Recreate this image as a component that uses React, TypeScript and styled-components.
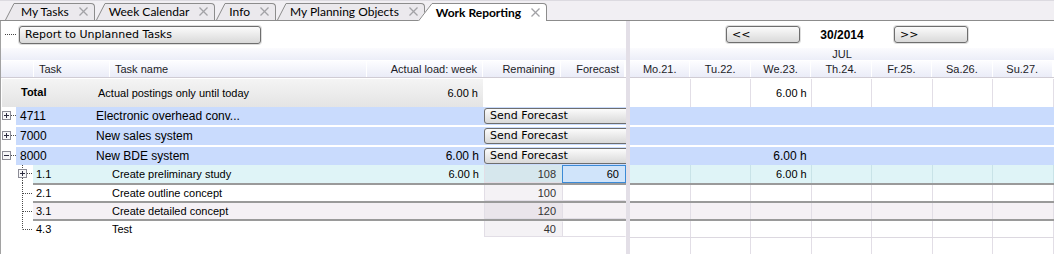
import React from 'react';
import styled, { createGlobalStyle } from 'styled-components';

type Tone = 'blue' | 'cyan' | 'white' | 'pink';

interface TaskRow {
  id: string;
  name: string;
  level: 0 | 1;
  expander?: '+' | '-';
  branch?: 'mid' | 'last';
  actual?: string;
  remaining?: string;
  forecast?: string;
  tone: Tone;
  send?: boolean;
  we?: string;
  gap?: number;
  divider?: boolean;
}

const rows: TaskRow[] = [
  { id: '4711', name: 'Electronic overhead conv...', level: 0, expander: '+', tone: 'blue', send: true, gap: 2 },
  { id: '7000', name: 'New sales system', level: 0, expander: '+', tone: 'blue', send: true, gap: 2 },
  { id: '8000', name: 'New BDE system', level: 0, expander: '-', actual: '6.00 h', tone: 'blue', send: true, we: '6.00 h' },
  { id: '1.1', name: 'Create preliminary study', level: 1, expander: '+', actual: '6.00 h', remaining: '108', forecast: '60', tone: 'cyan', we: '6.00 h' },
  { id: '2.1', name: 'Create outline concept', level: 1, branch: 'mid', remaining: '100', tone: 'white', divider: true },
  { id: '3.1', name: 'Create detailed concept', level: 1, branch: 'mid', remaining: '120', tone: 'pink', divider: true },
  { id: '4.3', name: 'Test', level: 1, branch: 'last', remaining: '40', tone: 'white', divider: true },
];

const tabs = ['My Tasks', 'Week Calendar', 'Info', 'My Planning Objects', 'Work Reporting'];
const days = ['Mo.21.', 'Tu.22.', 'We.23.', 'Th.24.', 'Fr.25.', 'Sa.26.', 'Su.27.'];

const toneBg: Record<Tone, string> = {
  blue: '#c9dbfd',
  cyan: '#dff4f7',
  white: '#ffffff',
  pink: '#f5f1f5',
};

const toneLine: Record<Tone, string> = {
  blue: 'transparent',
  cyan: '#c9e3e8',
  white: '#e2dee6',
  pink: '#e2dee6',
};

const GlobalStyle = createGlobalStyle`
  html, body { margin: 0; padding: 0; background: #fff; }
  body { font-family: "Liberation Sans", Arial, sans-serif; font-size: 11px; color: #000; }
  * { box-sizing: border-box; }
`;

const Window = styled.div`
  width: 1054px;
  height: 254px;
  display: flex;
  flex-direction: column;
  overflow: hidden;
  background: #fff;
`;

/* ---------- tabs ---------- */

const TabStrip = styled.div`
  height: 21px;
  flex: none;
  display: flex;
  align-items: flex-end;
  padding-left: 5px;
  background: #f1eff3;
  border-top: 1px solid #dcdae0;
  border-bottom: 1px solid #8c8c8c;
`;

const TabItem = styled.div<{ $active?: boolean; $first?: boolean }>`
  display: flex;
  align-items: stretch;
  height: ${p => (p.$active ? 18 : 17)}px;
  margin-bottom: ${p => (p.$active ? -1 : 0)}px;
  margin-left: ${p => (p.$first ? 0 : p.$active ? -7 : 1)}px;
  position: relative;
  z-index: ${p => (p.$active ? 1 : 0)};
`;

const TabFace = styled.div<{ $active?: boolean; $first?: boolean }>`
  display: flex;
  align-items: center;
  gap: 10px;
  padding: 0 6px 1px ${p => (p.$first ? 7 : 4)}px;
  background: ${p => (p.$active ? '#fff' : '#ebe9ed')};
  border-top: 1px solid #8c8c8c;
  border-right: 1px solid #8c8c8c;
  border-top-right-radius: 4px;
  font-family: Lato, "Noto Sans", sans-serif;
  font-size: 12px;
  font-weight: ${p => (p.$active ? 700 : 400)};
  white-space: nowrap;
`;

const TabSlant = ({ w, h, fill }: { w: number; h: number; fill: string }) => (
  <svg width={w} height={h} style={{ display: 'block', flex: 'none' }}>
    <polygon points={`0,${h} ${w},0 ${w},${h}`} fill={fill} />
    <line x1={0.5} y1={h} x2={w} y2={0.5} stroke="#8c8c8c" />
  </svg>
);

const CloseMark = () => (
  <svg width={9} height={9} style={{ display: 'block' }}>
    <line x1={0.5} y1={0.5} x2={8.5} y2={8.5} stroke="#a2a2a6" strokeWidth={1.2} />
    <line x1={8.5} y1={0.5} x2={0.5} y2={8.5} stroke="#a2a2a6" strokeWidth={1.2} />
  </svg>
);

const Tab = ({ label, active, first }: { label: string; active?: boolean; first?: boolean }) => (
  <TabItem $active={active} $first={first}>
    <TabSlant w={active ? 14 : 9} h={active ? 18 : 17} fill={active ? '#fff' : '#ebe9ed'} />
    <TabFace $active={active} $first={first}>
      <span>{label}</span>
      <CloseMark />
    </TabFace>
  </TabItem>
);

/* ---------- panes ---------- */

const Workspace = styled.div`
  flex: 1;
  display: flex;
  min-height: 0;
`;

const LeftPane = styled.div`
  width: 626px;
  flex: none;
  display: flex;
  flex-direction: column;
  border-left: 1px solid #a2a2a2;
  overflow: hidden;
`;

const Splitter = styled.div`
  width: 4px;
  flex: none;
  background: #e3dfe7;
`;

const RightPane = styled.div`
  flex: 1;
  display: flex;
  flex-direction: column;
  min-width: 0;
`;

const Toolbar = styled.div`
  height: 27px;
  flex: none;
  display: flex;
  align-items: center;
`;

const DotLead = styled.span`
  width: 11px;
  margin: 0 3px 0 4px;
  border-top: 1px dotted #444;
`;

const GreyButton = styled.button<{ $w: number; $h: number }>`
  width: ${p => p.$w}px;
  height: ${p => p.$h}px;
  margin: 0;
  padding: 0 0 0 5px;
  text-align: left;
  font-family: "DejaVu Sans", Verdana, sans-serif;
  font-size: 11px;
  line-height: ${p => p.$h - 2}px;
  color: #000;
  border: 1px solid #6e6e6e;
  border-radius: 3px;
  background: linear-gradient(#fbfbfb, #d9d9d9);
  box-shadow: 0 0 0 1px #dedede;
`;

const WeekNav = styled(Toolbar)`
  padding-left: 96px;
`;

const WeekLabel = styled.div`
  width: 94px;
  padding-right: 10px;
  text-align: center;
  font-size: 12px;
  font-weight: 700;
`;

const Band = styled.div`
  height: 12px;
  flex: none;
  display: flex;
  align-items: center;
  justify-content: center;
  background: linear-gradient(#fbfbfe, #eceef8);
  font-size: 11px;
  line-height: 12px;
  color: #1c1c28;
`;

const HeaderRow = styled.div<{ $cols: string }>`
  height: 18px;
  flex: none;
  display: grid;
  grid-template-columns: ${p => p.$cols};
  column-gap: 1px;
  padding: 1px 2px 0 0;
  border-bottom: 1px solid #d0ccd4;
  margin-bottom: 1px;
`;

const HeadCell = styled.div<{ $align?: 'left' | 'right' | 'center' }>`
  background: linear-gradient(#fdfdff, #eaecf7);
  padding: 0 5px;
  font-size: 11px;
  line-height: 16px;
  color: #1c1c28;
  white-space: nowrap;
  overflow: hidden;
  text-align: ${p => p.$align ?? 'left'};
`;

/* ---------- left rows ---------- */

const TotalRow = styled.div`
  height: 28px;
  flex: none;
  display: flex;
  padding-left: 1px;
`;

const TotalBand = styled.div`
  width: 481px;
  display: flex;
  align-items: center;
  background: linear-gradient(#f4f4f4, #e4e4e4);
`;

const TotalLabel = styled.div`
  width: 96px;
  padding-left: 19px;
  font-weight: 700;
  margin-top: -3px;
`;

const TotalNote = styled.div`
  flex: 1;
`;

const TotalValue = styled.div`
  padding-right: 5px;
`;

const TaskLine = styled.div<{ $gap?: number }>`
  height: 18px;
  flex: none;
  display: flex;
  margin-bottom: ${p => p.$gap ?? 0}px;
`;

const Gutter = styled.svg`
  display: block;
  flex: none;
`;

const TaskBody = styled.div<{ $tone: Tone; $level: 0 | 1; $divider?: boolean }>`
  flex: 1;
  min-width: 0;
  display: grid;
  grid-template-columns: ${p => (p.$level === 0 ? '80px 1fr 120px 142px' : '79px 1fr 120px 78px 64px')};
  align-items: center;
  background: ${p => toneBg[p.$tone]};
  border-top: ${p => (p.$divider ? '2px solid #9a9a9a' : 'none')};
  font-size: ${p => (p.$level === 0 ? 12 : 11)}px;
  white-space: nowrap;
`;

const IdCell = styled.div<{ $level: 0 | 1 }>`
  padding-left: ${p => (p.$level === 0 ? 4 : 3)}px;
`;

const NameCell = styled.div`
  overflow: hidden;
`;

const ActualCell = styled.div`
  text-align: right;
  padding-right: 5px;
`;

const RemainingCell = styled.div`
  align-self: stretch;
  display: flex;
  align-items: center;
  justify-content: flex-end;
  padding-right: 6px;
  color: #333;
  background: rgba(96, 76, 108, 0.07);
  border-left: 1px solid #e2dee6;
  border-bottom: 1px solid #e2dee6;
`;

const ForecastCell = styled.div<{ $editing?: boolean }>`
  align-self: stretch;
  display: flex;
  align-items: center;
  justify-content: flex-end;
  padding-right: 6px;
  border: 1px solid ${p => (p.$editing ? '#3b8ad6' : 'transparent')};
  border-bottom-color: ${p => (p.$editing ? '#3b8ad6' : '#e2dee6')};
  border-left-color: ${p => (p.$editing ? '#3b8ad6' : '#e2dee6')};
  background: ${p => (p.$editing ? '#d0e4fa' : 'transparent')};
`;

const SendCell = styled.div`
  overflow: hidden;
  height: 16px;
`;

/* ---------- right rows ---------- */

const DayLine = styled.div<{ $h: number; $gap?: number; $tone: Tone; $divider?: boolean }>`
  height: ${p => p.$h}px;
  flex: none;
  display: grid;
  grid-template-columns: repeat(7, 1fr);
  margin-bottom: ${p => p.$gap ?? 0}px;
  background: ${p => toneBg[p.$tone]};
  border-top: ${p => (p.$divider ? '2px solid #9a9a9a' : 'none')};
`;

const DayFiller = styled(DayLine)`
  flex: 1;
  border-top: 1px solid #dcd8e0;
`;

const DayCell = styled.div<{ $line: string; $big?: boolean }>`
  display: flex;
  align-items: center;
  justify-content: flex-end;
  padding-right: 4px;
  border-right: 1px solid ${p => p.$line};
  font-size: ${p => (p.$big ? 12 : 11)}px;
  white-space: nowrap;
`;

/* ---------- tree drawing ---------- */

const dots = { stroke: '#4a4a4a', strokeWidth: 1, strokeDasharray: '1 1' };

const Expander = ({ x, y, sign }: { x: number; y: number; sign: '+' | '-' }) => (
  <g>
    <rect x={x + 0.5} y={y + 0.5} width={8} height={8} fill="#f6f6f8" stroke="#8c8c96" />
    <line x1={x + 2} y1={y + 4.5} x2={x + 7} y2={y + 4.5} stroke="#2c2c40" />
    {sign === '+' && <line x1={x + 4.5} y1={y + 2} x2={x + 4.5} y2={y + 7} stroke="#2c2c40" />}
  </g>
);

const TreeGutter = ({ row }: { row: TaskRow }) => {
  if (row.level === 0) {
    return (
      <Gutter width={15} height={18}>
        <Expander x={1} y={4} sign={row.expander ?? '+'} />
        <line x1={10} y1={8.5} x2={15} y2={8.5} {...dots} />
      </Gutter>
    );
  }
  if (row.expander) {
    return (
      <Gutter width={32} height={18}>
        <line x1={21.5} y1={0} x2={21.5} y2={4} {...dots} />
        <line x1={21.5} y1={13} x2={21.5} y2={18} {...dots} />
        <Expander x={17} y={4} sign={row.expander} />
        <line x1={26} y1={8.5} x2={32} y2={8.5} {...dots} />
      </Gutter>
    );
  }
  return (
    <Gutter width={32} height={18}>
      <line x1={21.5} y1={0} x2={21.5} y2={row.branch === 'last' ? 10.5 : 18} {...dots} />
      <line x1={22} y1={10.5} x2={32} y2={10.5} {...dots} />
    </Gutter>
  );
};

const TaskRowView = ({ row }: { row: TaskRow }) => (
  <TaskLine $gap={row.gap}>
    <TreeGutter row={row} />
    <TaskBody $tone={row.tone} $level={row.level} $divider={row.divider}>
      <IdCell $level={row.level}>{row.id}</IdCell>
      <NameCell>{row.name}</NameCell>
      <ActualCell>{row.actual}</ActualCell>
      {row.send ? (
        <SendCell>
          <GreyButton $w={150} $h={16}>Send Forecast</GreyButton>
        </SendCell>
      ) : (
        <>
          <RemainingCell>{row.remaining}</RemainingCell>
          <ForecastCell $editing={!!row.forecast}>{row.forecast}</ForecastCell>
        </>
      )}
    </TaskBody>
  </TaskLine>
);

export default function App() {
  return (
    <>
      <GlobalStyle />
      <Window>
        <TabStrip>
          {tabs.map((t, i) => (
            <Tab key={t} label={t} active={t === 'Work Reporting'} first={i === 0} />
          ))}
        </TabStrip>
        <Workspace>
          <LeftPane>
            <Toolbar>
              <DotLead />
              <GreyButton $w={242} $h={18}>Report to Unplanned Tasks</GreyButton>
            </Toolbar>
            <Band />
            <HeaderRow $cols="32px 75px 1fr 115px 77px 63px">
              <HeadCell />
              <HeadCell>Task</HeadCell>
              <HeadCell>Task name</HeadCell>
              <HeadCell $align="right">Actual load: week</HeadCell>
              <HeadCell $align="right">Remaining</HeadCell>
              <HeadCell $align="right">Forecast</HeadCell>
            </HeaderRow>
            <TotalRow>
              <TotalBand>
                <TotalLabel>Total</TotalLabel>
                <TotalNote>Actual postings only until today</TotalNote>
                <TotalValue>6.00 h</TotalValue>
              </TotalBand>
            </TotalRow>
            {rows.map(r => (
              <TaskRowView key={r.id} row={r} />
            ))}
          </LeftPane>
          <Splitter />
          <RightPane>
            <WeekNav>
              <GreyButton $w={74} $h={17}>&lt;&lt;</GreyButton>
              <WeekLabel>30/2014</WeekLabel>
              <GreyButton $w={74} $h={17}>&gt;&gt;</GreyButton>
            </WeekNav>
            <Band>JUL</Band>
            <HeaderRow $cols="repeat(7, 1fr)">
              {days.map(d => (
                <HeadCell key={d} $align="center">{d}</HeadCell>
              ))}
            </HeaderRow>
            <DayLine $h={28} $tone="white">
              {days.map((d, i) => (
                <DayCell key={d} $line={toneLine.white}>{i === 2 ? '6.00 h' : ''}</DayCell>
              ))}
            </DayLine>
            {rows.map(r => (
              <DayLine key={r.id} $h={18} $gap={r.gap} $tone={r.tone} $divider={r.divider}>
                {days.map((d, i) => (
                  <DayCell key={d} $line={toneLine[r.tone]} $big={r.level === 0}>
                    {i === 2 ? r.we : ''}
                  </DayCell>
                ))}
              </DayLine>
            ))}
            <DayFiller $h={0} $tone="white">
              {days.map(d => (
                <DayCell key={d} $line={toneLine.white} />
              ))}
            </DayFiller>
          </RightPane>
        </Workspace>
      </Window>
    </>
  );
}
